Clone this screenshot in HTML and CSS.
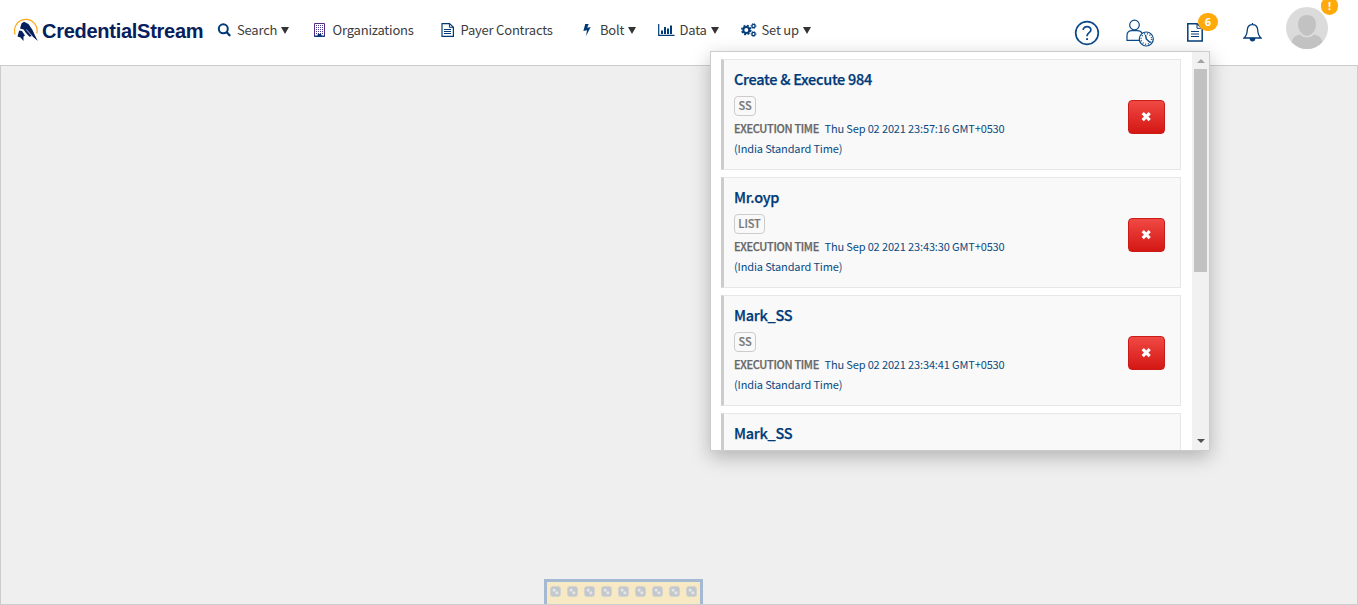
FILE: index.html
```html
<!DOCTYPE html>
<html lang="en">
<head>
<meta charset="utf-8">
<title>CredentialStream</title>
<link rel="stylesheet" href="styles.css">
</head>
<body>
<header class="topbar">
  <a class="brand">
    <svg class="brand-mark" width="24" height="24" viewBox="0 0 24 24"><path d="M1.200 16.500A11.300 11.300 0 1 1 22.800 15.500" fill="none" stroke="#fba919" stroke-width="1.200"/><path d="M6 10.500L7.500 5.500L10 3.800L14.500 6L18.500 12L21 17.500L23.800 23L18 18L15.500 18.800L12 15L9.500 11.500Z" fill="#06205c"/><path d="M12.300 11.500L18.500 18.500" stroke="#fff" stroke-width=".7"/><path d="M5.200 12.500L8 13L11 17.500L9.500 18.500V23L6.500 19.500L3.500 18.500Z" fill="#06205c"/></svg>
    <span class="brand-name">CredentialStream</span>
  </a>
  <nav class="nav">
    <a class="nav-item search"><span class="ico"><svg width="14" height="14" viewBox="0 0 14 14" fill="none" stroke="#003a78"><circle cx="6.300" cy="5.800" r="4.500" stroke-width="2"/><path d="M9.800 9.300L12.500 12.300" stroke-width="2.300" stroke-linecap="round"/></svg></span><span class="label">Search</span><i class="caret"></i></a>
    <a class="nav-item org"><span class="ico"><svg width="12" height="14" viewBox="0 0 12 14"><path d="M1.500 .5H11.500V13.500H1.500Z" fill="#fff" stroke="#5a2a86"/><path d="M3 2.500H10M3 4.500H10M3 6.500H10M3 8.500H10M3 10.500H10" stroke="#47398a" stroke-dasharray="1 1"/><path d="M1 13H12M5 11.500H8V14H5Z" fill="#003a78" stroke="#003a78"/></svg></span><span class="label">Organizations</span></a>
    <a class="nav-item payer"><span class="ico"><svg width="13" height="14" viewBox="0 0 13 14" fill="none" stroke="#003a78"><path d="M1 .6H8.500L12.400 4.200V13.400H1Z" stroke-width="1.200"/><path d="M8.400 .6V4.300H12.200"/><path d="M3 6.500H10M3 8.500H10M3 10.500H10"/></svg></span><span class="label">Payer Contracts</span></a>
    <a class="nav-item bolt"><span class="ico"><svg width="9" height="14" viewBox="0 0 9 14"><path d="M3.200 1H6.700L5.200 4.700L8.700 4L4 13L5 7.300L1.400 8Z" fill="#003a78"/></svg></span><span class="label">Bolt</span><i class="caret"></i></a>
    <a class="nav-item data"><span class="ico"><svg width="17" height="14" viewBox="0 0 17 14" fill="none" stroke="#003a78"><path d="M.7 1V12.400H16.500" stroke-width="1.200"/><path d="M4 11V7.500M7 11V4M10 11V5.500M13 11V2.500" stroke-width="2"/></svg></span><span class="label">Data</span><i class="caret"></i></a>
    <a class="nav-item setup"><span class="ico"><svg width="16" height="14" viewBox="0 0 16 14" fill="none" stroke="#003a78"><circle cx="5.300" cy="7" r="3" stroke-width="2"/><circle cx="5.300" cy="7" r="4.500" stroke-width="1.500" stroke-dasharray="2 1.534"/><circle cx="12.500" cy="3" r="1.600" stroke-width="1.300"/><circle cx="12.500" cy="3" r="2.500" stroke-width=".8" stroke-dasharray="1.100 .863"/><circle cx="12.500" cy="11" r="1.600" stroke-width="1.300"/><circle cx="12.500" cy="11" r="2.500" stroke-width=".8" stroke-dasharray="1.100 .863"/></svg></span><span class="label">Set up</span><i class="caret"></i></a>
  </nav>
  <div class="tools">
    <svg class="help" width="26" height="26" viewBox="0 0 26 26" fill="none" stroke="#0b4a88"><circle cx="13" cy="13" r="11.300" stroke-width="1.700"/><path d="M9.200 10C9.200 5.500 17 5.600 16.900 10C16.800 12.800 13 12.700 13 16.200" stroke-width="1.700"/><path d="M12.100 18.200H14V20H12.100Z" fill="#0b4a88" stroke="none"/></svg>
    <svg class="jobs" width="28" height="28" viewBox="0 0 28 28" fill="none" stroke="#0b4a88" stroke-width="1.200"><circle cx="8.500" cy="6" r="4.800"/><path d="M14 21.400H1V16.500C1 13 3 11.600 6 11.600H11C14 11.600 15.400 12.600 16 14.500"/><circle cx="20.300" cy="20" r="7" fill="#fff"/><path d="M19.500 15.800L20.300 20L24 23.500" stroke-width="1.400"/><circle cx="20.300" cy="20" r="5.300" stroke-width="1.500" stroke-dasharray=".9 1.875"/></svg>
    <span class="with-badge doc"><svg width="18" height="20" viewBox="0 0 18 20" fill="none" stroke="#073d78"><path d="M1.800 1.800H11L16.200 6V18.900H1.800Z" stroke-width="1.500"/><path d="M11 1.800V6.300H16.200"/><path d="M5 9.500H13M5 12H13M5 14.500H13" stroke-width="1.200"/></svg><b class="badge">6</b></span>
    <svg class="bell" width="19" height="20" viewBox="0 0 19 20" fill="none" stroke="#073d78" stroke-width="1.300"><path d="M9.500 1V2.800M1 16H18C15.500 14 15 12 14.700 8C14.500 4.800 12.500 2.700 9.500 2.700C6.500 2.700 4.500 4.800 4.300 8C4 12 3.500 14 1 16Z"/><path d="M7.300 16.500C7.500 19.500 11.500 19.500 11.700 16.500Z" fill="#073d78"/></svg>
    <span class="with-badge user"><svg width="42" height="42" viewBox="0 0 42 42"><defs><clipPath id="face"><circle cx="21" cy="21" r="21"/></clipPath></defs><circle cx="21" cy="21" r="21" fill="#dbdbdb"/><g clip-path="url(#face)" fill="#c2c2c2"><path d="M21 8C27 8 30 12 30 17.500C30 23 26 28.700 21 28.700S12 23 12 17.500C12 12 15 8 21 8Z"/><path d="M14 27.500C17 31.400 25 31.400 28 27.500C33 28.500 36 31 36.500 36V42H5.500V36C6 31 9 28.500 14 27.500Z"/></g></svg><b class="badge">!</b></span>
  </div>
</header>
<main class="frame">
  <div class="loader"><i></i><i></i><i></i><i></i><i></i><i></i><i></i><i></i><i></i></div>
</main>
<section class="popup">
  <div class="list">
    <article class="card"><div class="info"><h3>Create &amp; Execute 984</h3><span class="tag">SS</span><p><b>EXECUTION TIME</b><span class="when">Thu Sep 02 2021 23:57:16 GMT+0530</span><br><span class="zone">(India Standard Time)</span></p></div><button class="remove"><svg width="12" height="12" viewBox="0 0 12 12"><path d="M1.700 2.200L8.700 9.200M8.700 2.200L1.700 9.200" stroke="#fff" stroke-width="3.100"/></svg></button></article>
    <article class="card"><div class="info"><h3>Mr.oyp</h3><span class="tag list-tag">LIST</span><p><b>EXECUTION TIME</b><span class="when">Thu Sep 02 2021 23:43:30 GMT+0530</span><br><span class="zone">(India Standard Time)</span></p></div><button class="remove"><svg width="12" height="12" viewBox="0 0 12 12"><path d="M1.700 2.200L8.700 9.200M8.700 2.200L1.700 9.200" stroke="#fff" stroke-width="3.100"/></svg></button></article>
    <article class="card"><div class="info"><h3>Mark_SS</h3><span class="tag">SS</span><p><b>EXECUTION TIME</b><span class="when">Thu Sep 02 2021 23:34:41 GMT+0530</span><br><span class="zone">(India Standard Time)</span></p></div><button class="remove"><svg width="12" height="12" viewBox="0 0 12 12"><path d="M1.700 2.200L8.700 9.200M8.700 2.200L1.700 9.200" stroke="#fff" stroke-width="3.100"/></svg></button></article>
    <article class="card"><div class="info"><h3>Mark_SS</h3></div></article>
  </div>
  <div class="scroll"><i class="up"></i><i class="thumb"></i><i class="down"></i></div>
</section>
</body>
</html>
```
FILE: styles.css
```css
* { box-sizing: border-box; }
body { margin: 0; height: 605px; overflow: hidden; display: flex; flex-direction: column; position: relative; background: #fff; font-family: "Noto Sans CJK SC", "Noto Sans", sans-serif; color: #333; }
svg { display: block; flex: none; }
.topbar { height: 65px; flex: none; display: flex; align-items: flex-start; }
.brand { display: flex; width: 203px; margin-right: 14px; padding: 18px 0 0 14px; }
.brand-name { margin-left: 4px; font: 700 20px/26px "Liberation Sans", Arial, sans-serif; letter-spacing: -.27px; color: #06205c; white-space: nowrap; }
.nav { display: grid; grid-template-columns: 96px 128px 141px 76px 83px 90px; }
.nav-item { display: flex; align-items: center; height: 60px; font-size: 13px; letter-spacing: -.2px; white-space: nowrap; }
.ico { flex: none; display: flex; width: 20px; }
.org .ico { width: 19.5px; }
.payer .ico { width: 19.5px; }
.bolt .ico { width: 18px; }
.data .ico { width: 21.5px; }
.setup .ico { width: 20.5px; }
.label { line-height: 20px; color: #3c3c3c; }
.caret { margin: 1px 0 0 4px; border: 4px solid transparent; border-top: 7px solid #333; border-bottom: 0; }
.tools { flex: 1; display: flex; align-items: flex-start; margin-left: 243px; }
.help { margin-top: 20px; }
.jobs { margin: 19px 0 0 26px; }
.with-badge { position: relative; }
.doc { margin: 22px 0 0 32px; }
.bell { margin: 22px 0 0 39px; }
.user { margin: 7px 0 0 24px; }
.badge { position: absolute; height: 18px; border-radius: 9px; background: #ffa90a; color: #fff; font: 700 11px/18px "Noto Sans", sans-serif; text-align: center; }
.doc .badge { width: 20px; left: 12px; top: -9px; }
.user .badge { width: 17px; left: 35px; top: -10px; }
.frame { flex: 1; border: 1px solid #ccc; background: #efefef; display: flex; justify-content: center; align-items: flex-end; padding-right: 111px; }
.loader { width: 159px; height: 25px; border: 3px solid #a5b9d2; border-bottom: 0; background: #f8e9c5; display: flex; justify-content: space-between; padding: 4px 3px 0; }
.loader i { width: 11px; height: 11px; border: 1px solid #d3d3d0; border-radius: 3px; background: radial-gradient(circle at 35% 35%, #e4e5e5 1px, transparent 2px), radial-gradient(circle at 65% 65%, #e4e5e5 1px, transparent 2px), #c3c8cc; }
.popup { position: absolute; left: 710px; top: 51px; width: 500px; height: 400px; border: 1px solid #ccc; background: #fff; display: flex; overflow: hidden; box-shadow: 0 6px 18px rgba(0,0,0,.25); }
.list { flex: 1; padding: 7px 11px 0 10px; }
.card { height: 111px; margin-bottom: 7px; padding: 9px 15px 0 10px; border: 1px solid #e7e7e7; border-left: 3px solid #ccc; background: #f9f9f9; display: flex; justify-content: space-between; }
.info { white-space: nowrap; }
h3 { margin: 0; font-size: 14.5px; line-height: 20px; font-weight: 500; letter-spacing: -.28px; -webkit-text-stroke: .25px #003a78; color: #003a78; }
.tag { display: block; width: 22px; height: 20px; margin-top: 7px; border: 1px solid #ccc; border-radius: 4px; font-size: 11px; line-height: 17px; font-weight: 500; letter-spacing: -.1px; -webkit-text-stroke: .2px #777; text-align: center; color: #777; }
.list-tag { width: 31px; }
p { margin: 2px 0 0; font-size: 11px; line-height: 20px; letter-spacing: -.14px; color: #0b4a80; }
p b { font-weight: 500; letter-spacing: -.33px; -webkit-text-stroke: .25px #666; color: #666; margin-right: 5.5px; }
.remove { width: 37px; height: 34px; margin-top: 31px; padding: 0; border: 1px solid #c91b18; border-radius: 4px; background: linear-gradient(#f04944, #d41714); display: flex; align-items: center; justify-content: center; }
.scroll { width: 17px; padding: 7px 0 7px; background: #f1f1f1; display: flex; flex-direction: column; align-items: center; }
.up { border: 4px solid transparent; border-top: 0; border-bottom: 4px solid #a3a3a3; }
.thumb { width: 13px; height: 203px; margin-top: 6px; background: #c1c1c1; }
.down { margin-top: auto; border: 4px solid transparent; border-bottom: 0; border-top: 4px solid #505050; }
```
